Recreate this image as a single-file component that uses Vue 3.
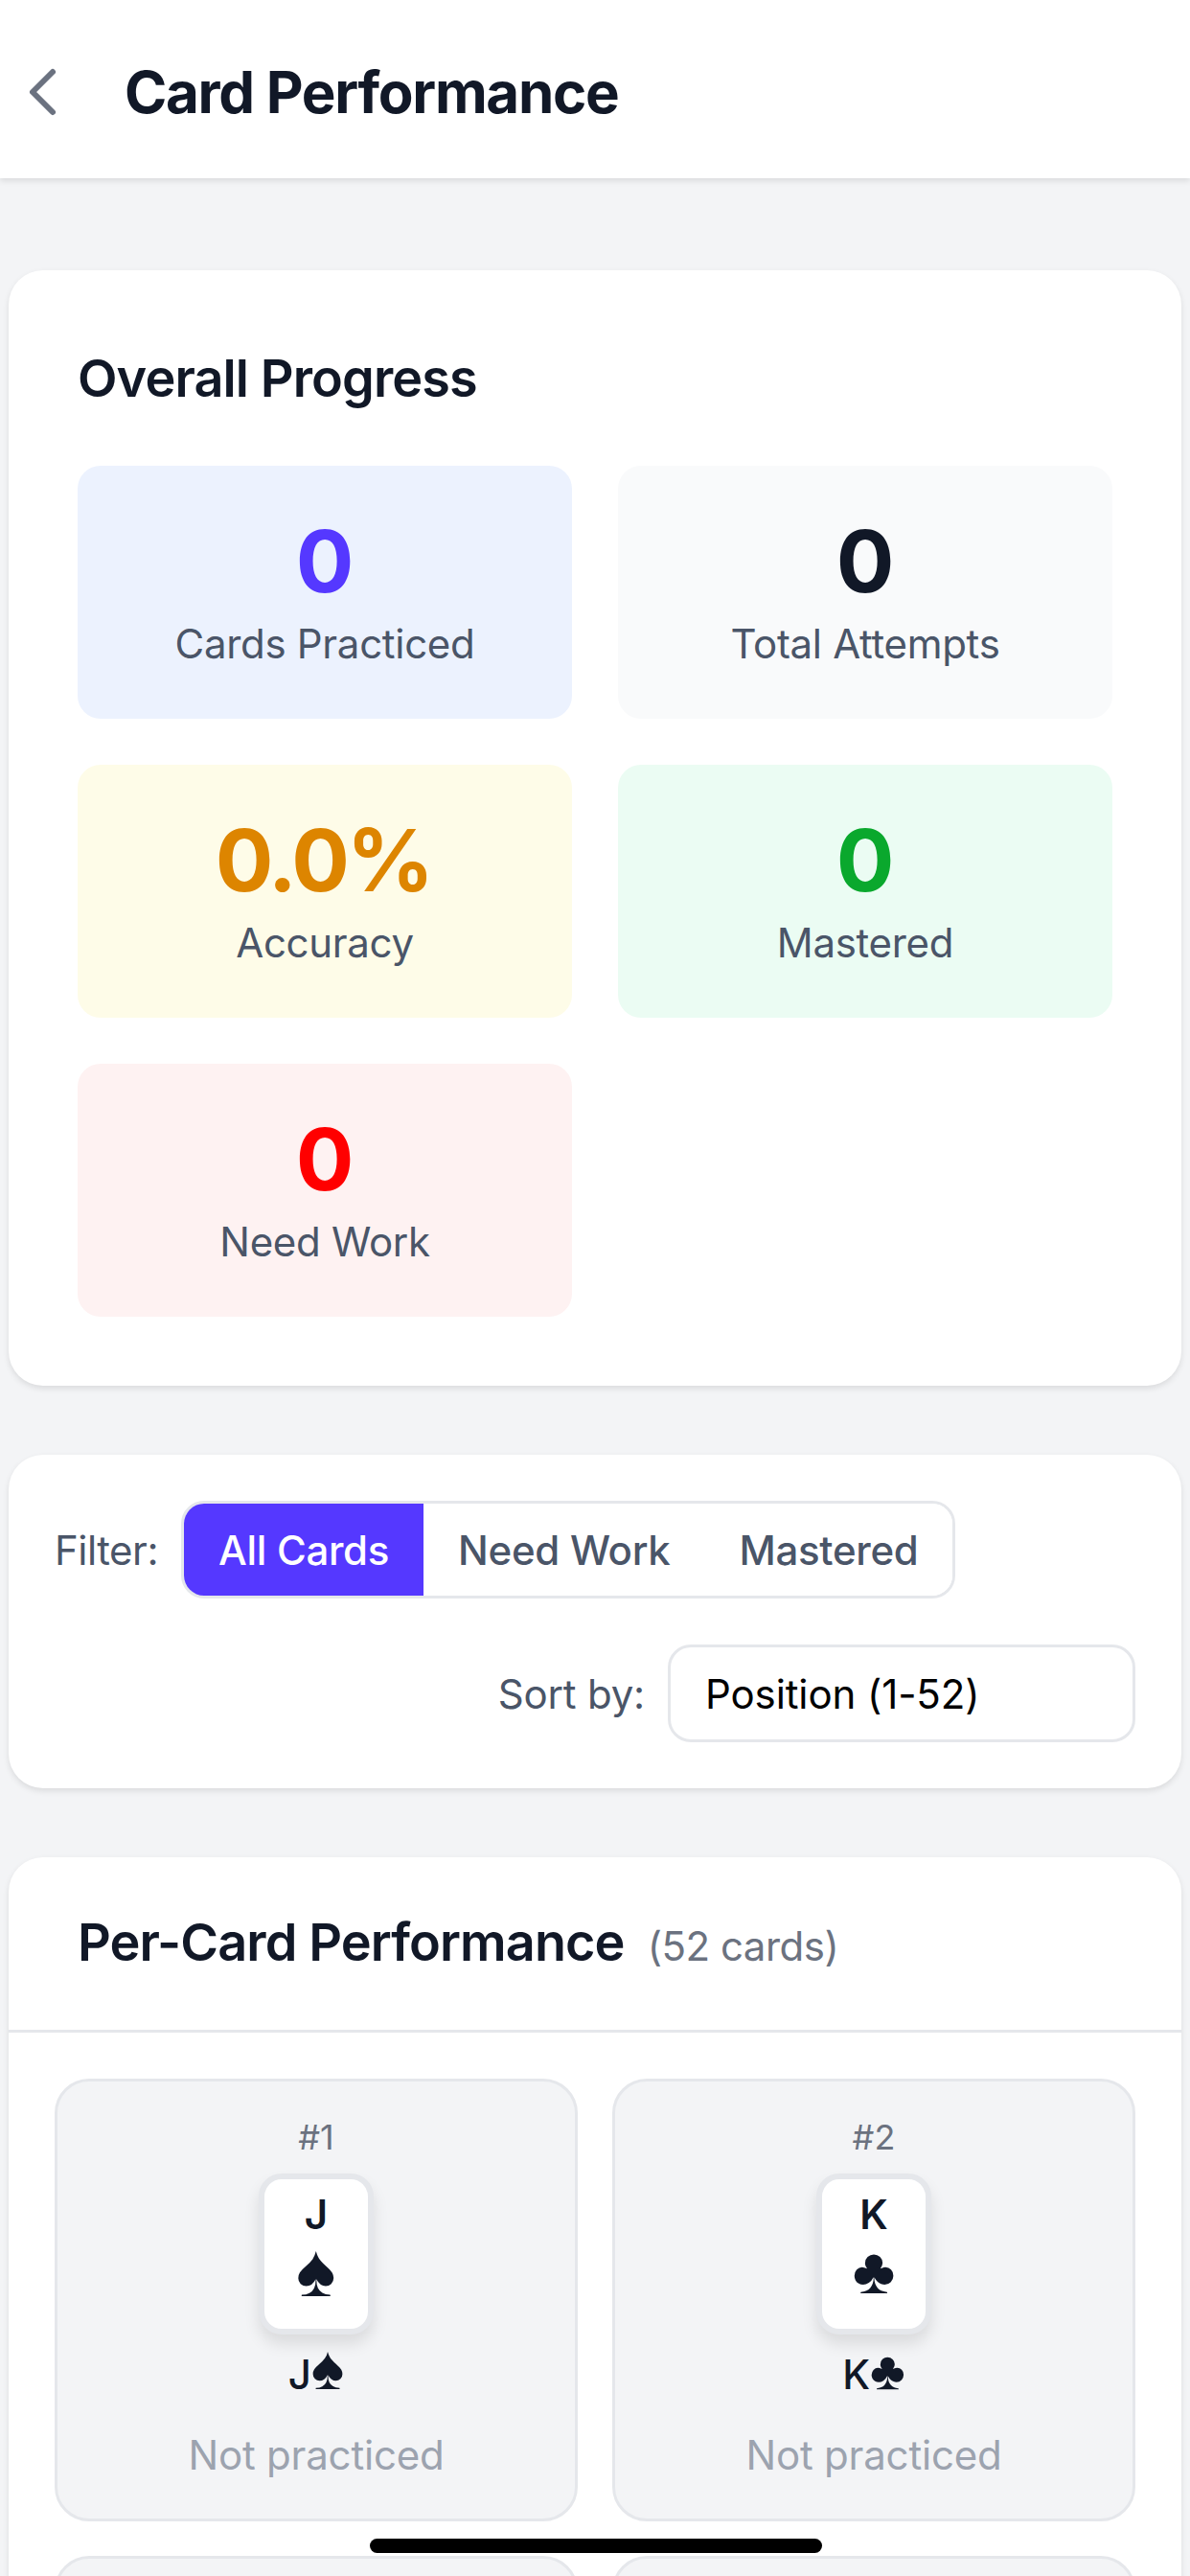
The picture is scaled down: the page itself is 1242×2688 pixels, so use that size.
<template>
  <div class="page">
    <header class="topbar">
      <button class="back" aria-label="Back">
        <svg width="33" height="54" viewBox="0 0 33 54" fill="none">
          <path d="M28 6 L7 27 L28 48" stroke="#6b7280" stroke-width="6" stroke-linecap="round" stroke-linejoin="round" />
        </svg>
      </button>
      <h1>Card Performance</h1>
    </header>

    <main class="content">
      <section class="panel overall">
        <h2>Overall Progress</h2>
        <div class="stats">
          <div v-for="s in stats" :key="s.label" class="stat" :class="s.tone">
            <div class="value">{{ s.value }}</div>
            <div class="label">{{ s.label }}</div>
          </div>
        </div>
      </section>

      <section class="panel controls">
        <div class="control">
          <span class="control-label filter-label">Filter:</span>
          <div class="segments">
            <button v-for="(f, i) in filters" :key="f" class="segment" :class="{ active: i === 0 }">{{ f }}</button>
          </div>
        </div>
        <div class="control sort">
          <span class="control-label">Sort by:</span>
          <div class="select">Position (1-52)</div>
        </div>
      </section>

      <section class="panel cards">
        <div class="cards-head">
          <h2>Per-Card Performance</h2>
          <span class="count">(52 cards)</span>
        </div>
        <div class="card-grid">
          <div v-for="c in cards" :key="c.pos" class="item" :class="c.kind">
            <div class="pos">#{{ c.pos }}</div>
            <div class="playing">
              <span class="rank">{{ c.rank }}</span>
              <span class="suit">{{ c.suit }}</span>
            </div>
            <div class="name">{{ c.rank }}<span class="name-suit">{{ c.suit }}</span></div>
            <div class="state">Not practiced</div>
          </div>
          <!-- next row starts right at the bottom edge, nothing readable yet -->
          <div class="item"></div>
          <div class="item"></div>
        </div>
      </section>
    </main>

    <div class="home-bar"></div>
  </div>
</template>

<script setup>
const stats = [
  { value: '0', label: 'Cards Practiced', tone: 'blue' },
  { value: '0', label: 'Total Attempts', tone: 'gray' },
  { value: '0.0%', label: 'Accuracy', tone: 'yellow' },
  { value: '0', label: 'Mastered', tone: 'green' },
  { value: '0', label: 'Need Work', tone: 'red' }
]

const filters = ['All Cards', 'Need Work', 'Mastered']

const cards = [
  { pos: 1, rank: 'J', suit: '♠', kind: 'spade' },
  { pos: 2, rank: 'K', suit: '♣', kind: 'club' }
]
</script>

<style>
html,
body {
  margin: 0;
  background: #f3f4f6;
}
</style>

<style scoped>
.page {
  position: relative;
  height: 2688px;
  overflow: hidden;
  background: #f3f4f6;
  font-family: Inter, "Liberation Sans", sans-serif;
  color: #111827;
}

.topbar {
  height: 186px;
  box-sizing: border-box;
  display: flex;
  align-items: center;
  padding: 6px 27px 0;
  background: #fff;
  box-shadow: 0 3px 6px rgba(0, 0, 0, 0.1);
}

.back {
  width: 103px;
  padding: 0;
  border: none;
  background: none;
  display: flex;
}

.topbar h1 {
  margin: 0;
  font-size: 60px;
  font-weight: 700;
  letter-spacing: -1.3px;
}

.content {
  display: flex;
  flex-direction: column;
  gap: 72px;
  padding: 96px 9px 0;
}

.panel {
  background: #fff;
  border-radius: 36px;
  box-shadow: 0 3px 6px rgba(0, 0, 0, 0.1);
}

.overall {
  padding: 72px;
}

.overall h2,
.cards-head h2 {
  margin: 0;
  font-size: 54px;
  font-weight: 600;
  line-height: 81px;
  letter-spacing: -0.9px;
}

.stats {
  display: grid;
  grid-template-columns: 1fr 1fr;
  gap: 48px;
  margin-top: 51px;
}

.stat {
  height: 264px;
  box-sizing: border-box;
  padding-top: 46px;
  border-radius: 24px;
  text-align: center;
}

.stat .value {
  padding-right: 3px;
  font-size: 90px;
  line-height: 108px;
  font-weight: 700;
  letter-spacing: -3px;
}

.stat .label {
  margin-top: 5px;
  font-size: 42px;
  line-height: 54px;
  letter-spacing: -0.3px;
  color: #4a5568;
}

.blue { background: #ecf2fe; }
.blue .value { color: #5538ff; }
.gray { background: #f9fafb; }
.gray .value { color: #111827; }
.yellow { background: #fefce8; }
.yellow .value { color: #dd8500; }
.green { background: #ebfcf3; }
.green .value { color: #0aa82d; }
.red { background: #fef2f2; }
.red .value { color: #ff0000; }

.controls {
  display: flex;
  flex-wrap: wrap;
  gap: 48px;
  padding: 48px;
}

.control {
  display: flex;
  align-items: center;
  gap: 24px;
}

.sort {
  margin-left: auto;
}

.control-label {
  font-size: 42px;
  letter-spacing: -0.2px;
  color: #4a5568;
}

.filter-label {
  letter-spacing: -0.5px;
}

.segments {
  display: flex;
  height: 102px;
  box-sizing: border-box;
  border: 3px solid #e5e7eb;
  border-radius: 24px;
  overflow: hidden;
}

.segment {
  padding: 0 36px;
  border: none;
  background: #fff;
  font: inherit;
  font-size: 42px;
  font-weight: 500;
  letter-spacing: -0.3px;
  color: #4a5568;
}

.segment.active {
  background: #5538ff;
  color: #fff;
}

.select {
  width: 488px;
  height: 102px;
  box-sizing: border-box;
  display: flex;
  align-items: center;
  padding: 0 36px;
  border: 3px solid #e5e7eb;
  border-radius: 24px;
  font-size: 42px;
  letter-spacing: -0.1px;
  color: #000;
}

.cards-head {
  display: flex;
  align-items: baseline;
  gap: 24px;
  padding: 48px 72px 51px;
  border-bottom: 3px solid #e5e7eb;
}

.count {
  font-size: 42px;
  letter-spacing: -0.5px;
  color: #6b7280;
}

.card-grid {
  display: grid;
  grid-template-columns: 1fr 1fr;
  gap: 36px;
  padding: 48px;
}

.item {
  height: 462px;
  box-sizing: border-box;
  display: flex;
  flex-direction: column;
  align-items: center;
  padding-top: 34px;
  border: 3px solid #e5e7eb;
  border-radius: 36px;
  background: #f3f4f6;
}

.pos {
  font-size: 36px;
  line-height: 48px;
  color: #6b7280;
}

.playing {
  width: 120px;
  height: 168px;
  box-sizing: border-box;
  display: flex;
  flex-direction: column;
  align-items: center;
  margin-top: 14px;
  padding-top: 12px;
  border: 6px solid #e5e7eb;
  border-radius: 24px;
  background: #fff;
  box-shadow: 0 10px 16px rgba(0, 0, 0, 0.1);
}

.rank {
  font-size: 42px;
  line-height: 50px;
  font-weight: 600;
}

.suit {
  font-family: "Liberation Sans", "DejaVu Sans", sans-serif;
  line-height: 66px;
}

.spade .suit { font-size: 78px; }
.club .suit { font-size: 68px; }

.name {
  margin-top: 17px;
  font-size: 42px;
  line-height: 50px;
  font-weight: 500;
}

.name-suit {
  font-family: "Liberation Sans", "DejaVu Sans", sans-serif;
  line-height: 0;
}

.spade .name-suit { font-size: 65px; }
.club .name-suit { font-size: 56px; }

.state {
  margin-top: 32px;
  font-size: 42px;
  line-height: 54px;
  letter-spacing: -0.2px;
  color: #9ca3af;
}

.home-bar {
  position: absolute;
  left: 386px;
  top: 2649px;
  width: 472px;
  height: 15px;
  border-radius: 8px;
  background: #000;
}
</style>
